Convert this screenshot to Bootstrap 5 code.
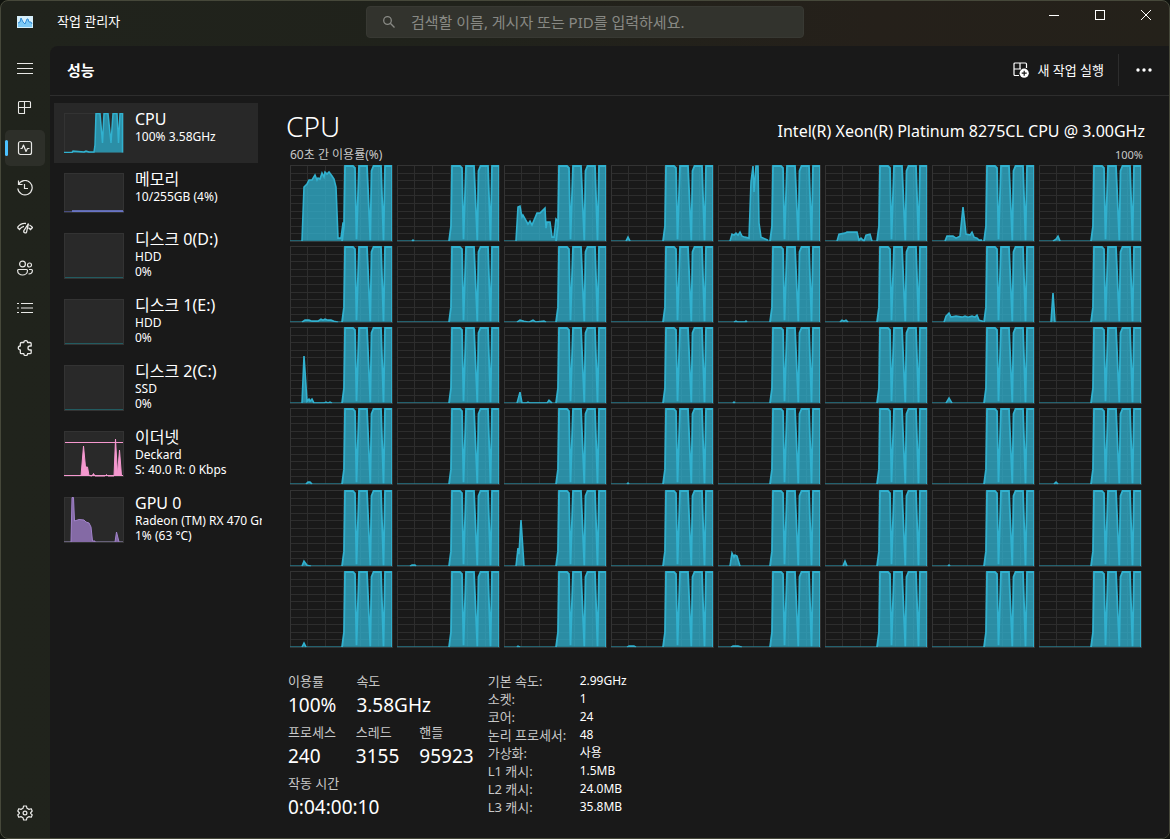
<!DOCTYPE html>
<html lang="ko" data-bs-theme="dark">
<head>
<meta charset="utf-8">
<meta name="viewport" content="width=device-width, initial-scale=1">
<title>작업 관리자</title>
<link href="https://cdn.jsdelivr.net/npm/bootstrap@5.3.0/dist/css/bootstrap.min.css" rel="stylesheet">
<style>
  :root { --accent: #4cc2ff; --panel: #191919; }
  body { font-family: "Noto Sans", "Noto Sans CJK KR", sans-serif; font-size: 12px; line-height: 18px; color: #fff; background: #10130e; }
  .app-window { border: 1px solid #46483a; border-radius: 8px; overflow: hidden; background: linear-gradient(90deg, #20231c 0, #20221b 40%, #25201a 75%, #24211a 100%); }
  .title-bar { height: 45px; }
  .app-title { font-size: 13px; padding-bottom: 3px; }
  .title-start { width: 365px; gap: 24px; padding: 0 16px 3px; }
  .search-box { width: 438px; height: 32px; margin-top: 5px; background: #32332d; border: 1px solid #383933; border-radius: 4px; }
  .search-box input { font-size: 15px; color: #ddd; }
  .search-box input::placeholder { color: #888984; opacity: 1; }
  .caption-btn { width: 46px; height: 28px; border: 0; background: none; color: #fff; padding: 0; }
  .caption-btn svg, .rail-btn svg { display: block; margin: auto; }
  .rail { width: 49px; padding: 4px 5px 7px 4px; gap: 4px; }
  .rail-btn { width: 40px; height: 36px; border: 0; border-radius: 5px; background: none; color: #e8e8e6; padding: 0; }
  .rail-btn.active { background: #2d2f29; }
  .rail-btn.active::before { content: ""; position: absolute; left: 0; top: 10px; width: 3px; height: 16px; border-radius: 2px; background: var(--accent); }
  .panel { background: var(--panel); border-top-left-radius: 8px; }
  .page-head { height: 50px; border-bottom: 1px solid #2d2d2d; padding: 0 0 2px 17px; }
  .page-head h1 { font-size: 15px; line-height: 20px; }
  .run-btn { border: 0; background: none; color: #fff; font-size: 13px; gap: 8px; padding: 0 14px 0 0; }
  .head-rule { width: 1px; height: 32px; background: #2d2d2d; }
  .more-btn { width: 50px; border: 0; background: none; color: #fff; }
  .perf-list { width: 212px; padding: 7px 0 0 4px; overflow: hidden; }
  .perf-item { width: 204px; min-height: 66px; padding: 6px 0 0 10px; gap: 11px; border: 0; background: none; color: #fff; text-align: left; white-space: nowrap; line-height: 15px; }
  .perf-item.short { min-height: 60px; }
  .perf-item.active { background: #282828; }
  .perf-item svg { width: 60px; height: 46px; margin-top: 4px; }
  .perf-item.short svg { height: 40px; }
  .perf-name { font-size: 16px; line-height: 20px; }
  .detail { padding: 10px 24px 16px 24px; }
  .detail h2 { font-size: 28px; line-height: 41px; font-weight: 300; }
  .cpu-model { font-size: 16px; }
  .chart-caption { color: #c8c8c8; line-height: 16px; margin: 0 2px 2px 4px; }
  .chart-max { font-size: 11px; }
  .core-grid { display: grid; grid-template-columns: repeat(8, minmax(0, 1fr)); grid-auto-rows: minmax(40px, 1fr); gap: 4px; margin: 0 3px 0 4px; }
  .core-grid > svg { width: 100%; height: 100%; min-height: 0; }
  .stats { margin: 24px 0 0 2px; gap: 14px; }
  .stat-block { row-gap: 3px; }
  .stat-row { gap: 20px; }
  .stat-row dt, .spec-table th { font-weight: 400; font-size: 13px; color: #c8c8c8; }
  .stat-row dd { font-size: 19px; line-height: 30px; margin: 0; }
  .spec-table th { width: 92px; padding: 0; }
  .spec-table td { padding: 0; }
</style>
</head>
<body>
<div class="app-window d-flex flex-column min-vh-100">

  <header class="title-bar d-flex">
    <div class="title-start d-flex align-items-center">
      <svg width="16" height="12" viewBox="0 0 16 12" aria-hidden="true"><rect width="16" height="12" fill="#d5effb"/><path d="M1 11V7l2-1 1-4 2 4 2 2 2-4 1-1 1 3 2 0 1 2v3z" fill="#7cc9f5"/><path d="M1 7l2-1 1-4 2 4 2 2 2-5 1 0 1 3 2 0 1 2" fill="none" stroke="#2f8bd6"/></svg>
      <span class="app-title">작업 관리자</span>
    </div>
    <label class="search-box d-flex align-items-center">
      <svg class="ms-3 me-3 flex-shrink-0" width="12" height="12" viewBox="0 0 12 12" fill="none" stroke="#888984" stroke-width="1.3" aria-hidden="true"><circle cx="4.5" cy="4.5" r="3.8"/><path d="M7.3 7.3L11.5 11.5"/></svg>
      <input type="text" class="border-0 bg-transparent p-0 flex-grow-1" placeholder="검색할 이름, 게시자 또는 PID를 입력하세요." aria-label="검색">
    </label>
    <div class="d-flex ms-auto">
      <button class="caption-btn" aria-label="최소화"><svg width="10" height="10" stroke="#fff"><path d="M0 5.5H10"/></svg></button>
      <button class="caption-btn" aria-label="최대화"><svg width="10" height="10" stroke="#fff" fill="none"><rect x=".5" y=".5" width="9" height="9"/></svg></button>
      <button class="caption-btn" aria-label="닫기"><svg width="10" height="10" stroke="#fff"><path d="M0 0L10 10M10 0L0 10"/></svg></button>
    </div>
  </header>

  <div class="d-flex flex-grow-1">
    <nav class="rail d-flex flex-column flex-shrink-0" aria-label="탐색">
      <button class="rail-btn" aria-label="메뉴"><svg width="16" height="16" stroke="currentColor"><path d="M0 3.5H16M0 8.5H16M0 13.5H16"/></svg></button>
      <button class="rail-btn" aria-label="프로세스"><svg width="16" height="16" fill="none" stroke="currentColor" stroke-width="1.1"><path d="M2.500 1.500H12.500A1 1 0 0 1 13.500 2.500V7.500H7.500V13.500H2.500A1 1 0 0 1 1.500 12.500V2.500A1 1 0 0 1 2.500 1.500zM7.500 1.500V7.500M1.500 7.500H7.500"/></svg></button>
      <button class="rail-btn active position-relative" aria-label="성능"><svg width="16" height="16" fill="none" stroke="currentColor" stroke-width="1.2" stroke-linejoin="round"><rect x="1.500" y="1.500" width="13" height="13" rx="2"/><path d="M3.500 8.500H5L6.500 5L9 11.500L10.500 8.500H12.500"/></svg></button>
      <button class="rail-btn" aria-label="앱 기록"><svg width="16" height="16" fill="none" stroke="currentColor" stroke-width="1.2"><path d="M1.500 .5V4.500H5.500M1.500 4.500A7.200 7.200 0 1 1 .8 8.500M7.500 4V8.500H11"/></svg></button>
      <button class="rail-btn" aria-label="시작 앱"><svg width="16" height="16" fill="none" stroke="currentColor" stroke-width="1.3"><path d="M.5 7.500A9 9 0 0 1 9 3.500M.5 7.500L2.500 9.500A7 7 0 0 1 7 6.300M12.500 5A9 9 0 0 1 15.500 7.500L13.500 9.500L11.500 7.800"/><path d="M11.500 3.500L6.700 11A1.600 1.600 0 0 0 9.500 12.300z"/></svg></button>
      <button class="rail-btn" aria-label="사용자"><svg width="16" height="16" fill="none" stroke="currentColor" stroke-width="1.2"><circle cx="5.500" cy="4" r="2.900"/><circle cx="12.500" cy="5" r="2"/><path d="M1.500 9.500H9.500A1 1 0 0 1 10.500 10.500C10.500 13.500 8 15 5.500 15S.6 13.500 .6 10.500A1 1 0 0 1 1.500 9.500zM12 9.500H14.500A1 1 0 0 1 15.400 10.500C15.400 12.500 14 14 11.500 14"/></svg></button>
      <button class="rail-btn" aria-label="세부 정보"><svg width="16" height="16" stroke="currentColor" stroke-width="1.1"><path d="M4 3.500H16M4 8H16M4 12.500H16M0 3.500H2M0 8H2M0 12.500H2"/></svg></button>
      <button class="rail-btn" aria-label="서비스"><svg width="16" height="16" fill="none" stroke="currentColor" stroke-width="1.3" stroke-linejoin="round"><path d="M4.500 2.500H6.800A1.900 1.900 0 0 1 10.600 2.500H13A1.200 1.200 0 0 1 14.200 3.700V6H13A2 2 0 0 0 13 10H14.200V12.500A1.200 1.200 0 0 1 13 13.700H10.600A1.900 1.900 0 0 1 6.800 13.700H4.500A1.200 1.200 0 0 1 3.300 12.500V10A2 2 0 0 1 3.300 6V3.700A1.200 1.200 0 0 1 4.500 2.500z"/></svg></button>
      <button class="rail-btn mt-auto" aria-label="설정"><svg width="16" height="16" fill="none" stroke="currentColor" stroke-width="1.2" stroke-linejoin="round"><path d="M6.600 1H9.400L10 3.300L12 4.400L14.200 3.700L15.200 6L13.500 8L15.200 10L14.200 12.300L12 11.600L10 12.700L9.400 15H6.600L6 12.700L4 11.600L1.800 12.300L.8 10L2.500 8L.8 6L1.800 3.700L4 4.400L6 3.300z"/><circle cx="8" cy="8" r="1.900"/></svg></button>
    </nav>

    <div class="panel d-flex flex-column flex-grow-1">
      <div class="page-head d-flex align-items-center">
        <h1 class="m-0 fw-bold me-auto">성능</h1>
        <button class="run-btn d-flex align-items-center"><svg width="16" height="16" fill="none" stroke="#fff" stroke-width="1.2"><path d="M6 13.500H2A1 1 0 0 1 1 12.500V2A1 1 0 0 1 2 1H12.500A1 1 0 0 1 13.500 2V6M7 1V7M1 7H7M7 7H8"/><circle cx="11.200" cy="11.200" r="4.600" fill="#fff" stroke="none"/><path d="M11.200 8.700V13.700M8.700 11.200H13.700" stroke="#191919"/></svg>새 작업 실행</button>
        <span class="head-rule"></span>
        <button class="more-btn" aria-label="더 보기"><svg width="16" height="4" fill="#fff"><circle cx="2" cy="2" r="1.700"/><circle cx="8" cy="2" r="1.700"/><circle cx="14" cy="2" r="1.700"/></svg></button>
      </div>

      <div class="d-flex flex-grow-1">
        <div class="perf-list flex-shrink-0" id="perfList"></div>

        <main class="detail d-flex flex-column flex-grow-1">
          <div class="d-flex justify-content-between align-items-baseline">
            <h2 class="m-0">CPU</h2>
            <span class="cpu-model">Intel(R) Xeon(R) Platinum 8275CL CPU @ 3.00GHz</span>
          </div>
          <div class="chart-caption d-flex justify-content-between"><span>60초 간 이용률(%)</span><span class="chart-max">100%</span></div>
          <div class="core-grid flex-grow-1" id="coreGrid"></div>
          <div class="stats d-flex">
            <div class="stat-block d-flex flex-column">
              <dl class="stat-row d-flex m-0">
                <div><dt>이용률</dt><dd>100%</dd></div>
                <div><dt>속도</dt><dd>3.58GHz</dd></div>
              </dl>
              <dl class="stat-row d-flex m-0">
                <div><dt>프로세스</dt><dd>240</dd></div>
                <div><dt>스레드</dt><dd>3155</dd></div>
                <div><dt>핸들</dt><dd>95923</dd></div>
              </dl>
              <dl class="stat-row d-flex m-0">
                <div><dt>작동 시간</dt><dd>0:04:00:10</dd></div>
              </dl>
            </div>
            <table class="spec-table align-self-start">
              <tbody>
                <tr><th scope="row">기본 속도:</th><td>2.99GHz</td></tr>
                <tr><th scope="row">소켓:</th><td>1</td></tr>
                <tr><th scope="row">코어:</th><td>24</td></tr>
                <tr><th scope="row">논리 프로세서:</th><td>48</td></tr>
                <tr><th scope="row">가상화:</th><td>사용</td></tr>
                <tr><th scope="row">L1 캐시:</th><td>1.5MB</td></tr>
                <tr><th scope="row">L2 캐시:</th><td>24.0MB</td></tr>
                <tr><th scope="row">L3 캐시:</th><td>35.8MB</td></tr>
              </tbody>
            </table>
          </div>
        </main>
      </div>
    </div>
  </div>
</div>

<script src="https://cdn.jsdelivr.net/npm/bootstrap@5.3.0/dist/js/bootstrap.bundle.min.js"></script>
<script>
  // Load phase that every core shares: the four full-load plateaus at the right.
  const LOAD = '52,76 54,61 55,1 63,1 65,3 66.500,74 69,1 77,1 80.300,75 81.500,6 83.500,1 91,1 93.500,75 95,1 102,1';
  // Early activity of single cores, keyed by core index (row * 8 + column).
  const EARLY = {
    0: '12,76 14,22 17,19 19,15 22,15 25,10 27,15 28,13 30,14 32,8 34,12 35,7 37,9 39,7 42,11 44,14 46,22 48,73 51,73 53,58 54.500,58',
    1: '15,76 16,75 17,76',
    2: '12,76 14,42 16,41 18,52 19,50 24,59 26,56 28,60 33,48 36,48 41,43 42,63 43,57 46,57 48,72 50,72 52,54 54,56',
    3: '15,76 17,72 19,76',
    4: '12,76 14,69 16,70 18,68 20,70 22,67 24,71 27,72 31,73 33,17 35,1 36,27 38,1 40,1 41,58 43,72 50,75',
    5: '12,76 14,69 20,68 22,67 32,67 34,75 36,73 39,76 41,70 45,69 47,76',
    6: '13,76 15,71 21,71 24,73 28,71 31,42 34,69 38,70 40,67 42,72 45,73 47,75 50,75',
    7: '14,76 17,74 19,71 21,76',
    8: '12,76 15,74 19,74 22,75 28,75 31,73 33,74 35,73 38,74 41,74 44,75 48,76',
    10: '13,76 16,74 20,75 25,76 29,74 32,76 40,75 42,76',
    12: '16,76 18,75 20,76 27,76 28,75 29,76',
    13: '15,76 17,74 19,75 21,74 23,76',
    14: '12,76 14,70 17,67 19,71 24,70 30,71 33,70 36,71 40,70 43,71 45,69 47,74 51,75',
    15: '12,76 14,47 16,76',
    16: '12,76 14,29 17,74 19,72 20,74 22,72 24,76 34,76 36,75 38,76 40,75 42,76',
    18: '13,76 16,65 18,76 22,76 24,75 26,76 43,76 45,73 48,76',
    20: '15,76 16,75 17,76',
    22: '14,76 17,71 20,76',
    24: '16,76 18,74 20,74 22,76',
    27: '16,76 17,75 18,76',
    31: '15,76 17,74 19,76',
    32: '12,76 14,71 17,75 21,76',
    33: '13,76 15,75 18,75 19,76',
    34: '12,76 14,58 15,64 17,30 20,76',
    36: '12,76 14,63 16,67 17,65 19,66 22,76',
    37: '18,76 20,71 22,76',
    38: '16,76 17,75 18,76',
    40: '12,76 14,72 16,76',
    42: '13,76 14,75 16,76',
    43: '16,76 18,75 23,75 25,76',
    44: '13,76 15,75 18,75 20,75 24,76'
  };

  let lines = '';
  for (let i = 1; i <= 9; i++) lines += `M0 ${Math.round(i * 7.6) + .5}H103`;
  for (const x of [17, 35, 53, 70, 88]) lines += `M${x + .5} 0V77`;

  document.getElementById('coreGrid').innerHTML = Array.from({ length: 48 }, (_, i) => {
    const early = EARLY[i] || '';
    return `<svg viewBox="0 0 103 77" preserveAspectRatio="none" role="img" aria-label="CPU ${i}">
      <path d="${lines}" stroke="#2d2d2d" fill="none" shape-rendering="crispEdges"/>
      <rect x=".5" y=".5" width="102" height="76" fill="none" stroke="#333" shape-rendering="crispEdges"/>
      <svg width="102" height="76">
        <polygon points="0,76 ${early} ${LOAD} 102,76" fill="#31b1cf" fill-opacity=".77"/>
        <path d="M0 75.500H103" stroke="#27788a"/>
        <polyline points="${early}" fill="none" stroke="#31b1cf" stroke-width="1.600"/>
        <polyline points="${LOAD} 102,76" fill="none" stroke="#31b1cf" stroke-width="1.800"/>
      </svg>
    </svg>`;
  }).join('');

  const flat = '<path d="M1 44.500H59" stroke="#225b60"/>';
  const devices = [
    { name: 'CPU', sub: ['100% 3.58GHz'], short: true, active: true,
      art: '<path d="M0 39.500H8L9 38L20 39L22 38L25 39L30 39L31 32L32 .5H36L38.500 30L40 .5H44L47 30L49 .5H53L54.500 30L56 .5H58.500V39.500" fill="#2b8ea6" stroke="#31b1cf" stroke-width="1.500"/>' },
    { name: '메모리', sub: ['10/255GB (4%)'], short: true, art: '<path d="M0 38.500H60" stroke="#484d80"/><path d="M8 38H59" stroke="#7582dc" stroke-width="1.500"/>' },
    { name: '디스크 0(D:)', sub: ['HDD', '0%'], art: flat },
    { name: '디스크 1(E:)', sub: ['HDD', '0%'], art: flat },
    { name: '디스크 2(C:)', sub: ['SSD', '0%'], art: flat },
    { name: '이더넷', sub: ['Deckard', 'S: 40.0 R: 0 Kbps'],
      art: '<path d="M1 11.500H59M0 44.500H59" stroke="#f598cf"/><path d="M17 45L19.500 15L21.500 36L23.500 36L25 44.500L28 45L29.500 42.500L31 45H41L42.500 43.500L44 45H50L51.500 8L53.500 43L55.500 19L57.500 45" fill="#f598cf" stroke="#f598cf"/>' },
    { name: 'GPU 0', sub: ['Radeon (TM) RX 470 Graphics', '1% (63 °C)'],
      art: '<path d="M0 44.500H59" stroke="#666078"/><path d="M7 45L8 .5H9.500L10.500 24L15 22.500L20 23L22 25L25 26L27 30L28.500 44H31V45M51 45L52.500 35L55 45" fill="#846aa5" stroke="#a283cc"/>' }
  ];
  document.getElementById('perfList').innerHTML = devices.map(d => {
    const h = d.short ? 40 : 46;
    return `<button class="perf-item d-flex align-items-start ${d.short ? 'short' : ''} ${d.active ? 'active' : ''}">
      <svg class="flex-shrink-0" viewBox="0 0 60 ${h}" aria-hidden="true"><rect x=".5" y=".5" width="59" height="${h - 1}" fill="#292929" stroke="#333"/>${d.art}</svg>
      <span><span class="perf-name d-block">${d.name}</span>${d.sub.map(s => `<span class="d-block">${s}</span>`).join('')}</span>
    </button>`;
  }).join('');
</script>
</body>
</html>
